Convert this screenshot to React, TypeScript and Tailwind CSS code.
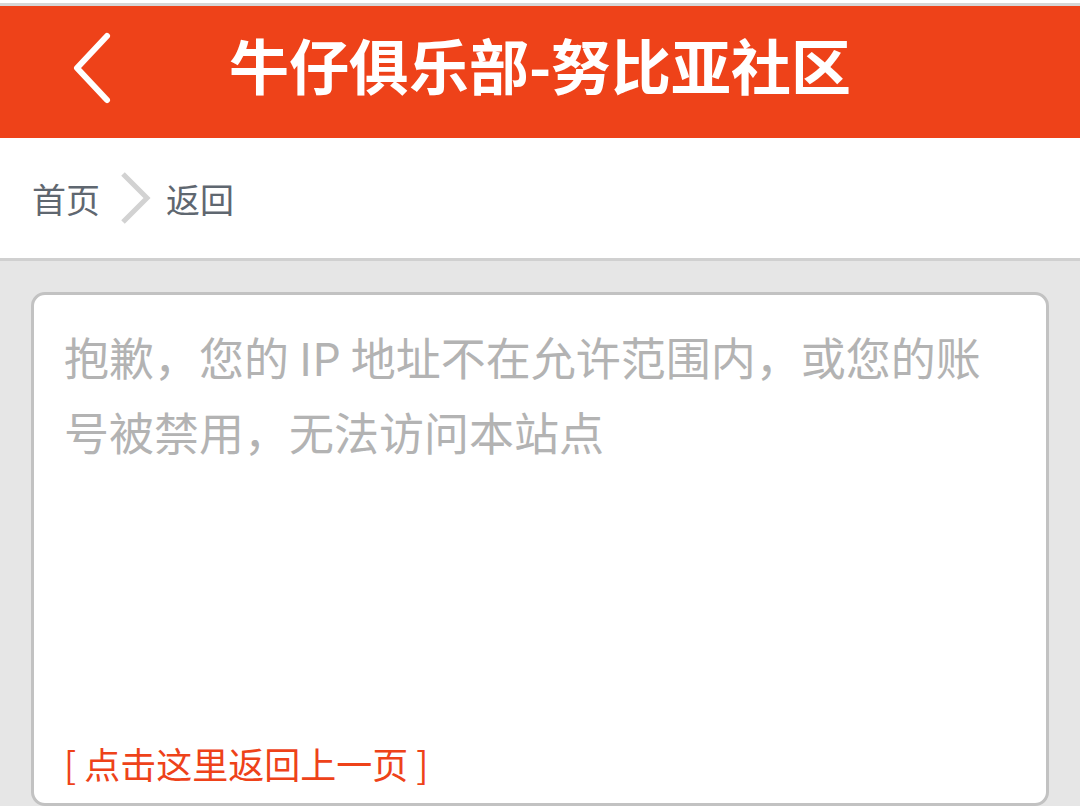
export default function App() {
  return (
    <div
      className="flex h-[806px] w-[1080px] flex-col overflow-hidden bg-[#e6e6e6]"
      style={{ fontFamily: '"Noto Sans CJK SC", "Noto Sans", sans-serif' }}
    >
      {/* Top strip */}
      <div className="h-[3px] bg-white" />
      <div className="h-[3px] bg-[#d6d6d6]" />

      {/* Header */}
      <div className="relative flex h-[132px] items-center justify-center bg-[#ee4219] pb-[16px]">
        <button className="absolute left-[66px] top-[21px] flex h-[82px] w-[52px] items-center justify-center">
          <svg width="46" height="76" viewBox="0 0 46 76" fill="none">
            <path d="M38 6 L8 38 L38 70" stroke="white" strokeWidth="6" strokeLinecap="round" strokeLinejoin="round" />
          </svg>
        </button>
        <h1 className="text-[60px] font-bold leading-none text-white">牛仔俱乐部-努比亚社区</h1>
      </div>

      {/* Breadcrumb */}
      <div className="flex h-[123px] items-center border-b-[3px] border-[#d0d0d0] bg-white pl-[32px] text-[34px] text-[#5f6770]">
        <span>首页</span>
        <svg className="ml-[20px] mr-[14px]" width="32" height="52" viewBox="0 0 32 52" fill="none">
          <path d="M3 2 L27 26 L3 50" stroke="#d2d2d2" strokeWidth="5" />
        </svg>
        <span>返回</span>
      </div>

      {/* Message card */}
      <div className="px-[31px] pt-[31px]">
        <div className="flex h-[514px] flex-col rounded-[14px] border-[3px] border-[#c2c2c2] bg-white px-[30px] pt-[24px] pb-[10px]">
          <p className="text-[45px] leading-[75px] text-[#b3b3b3]">
            抱歉，您的 IP 地址不在允许范围内，或您的账号被禁用，无法访问本站点
          </p>
          <a className="mt-auto text-[36px] leading-[60px] text-[#ee4219]">[ 点击这里返回上一页 ]</a>
        </div>
      </div>
    </div>
  )
}
